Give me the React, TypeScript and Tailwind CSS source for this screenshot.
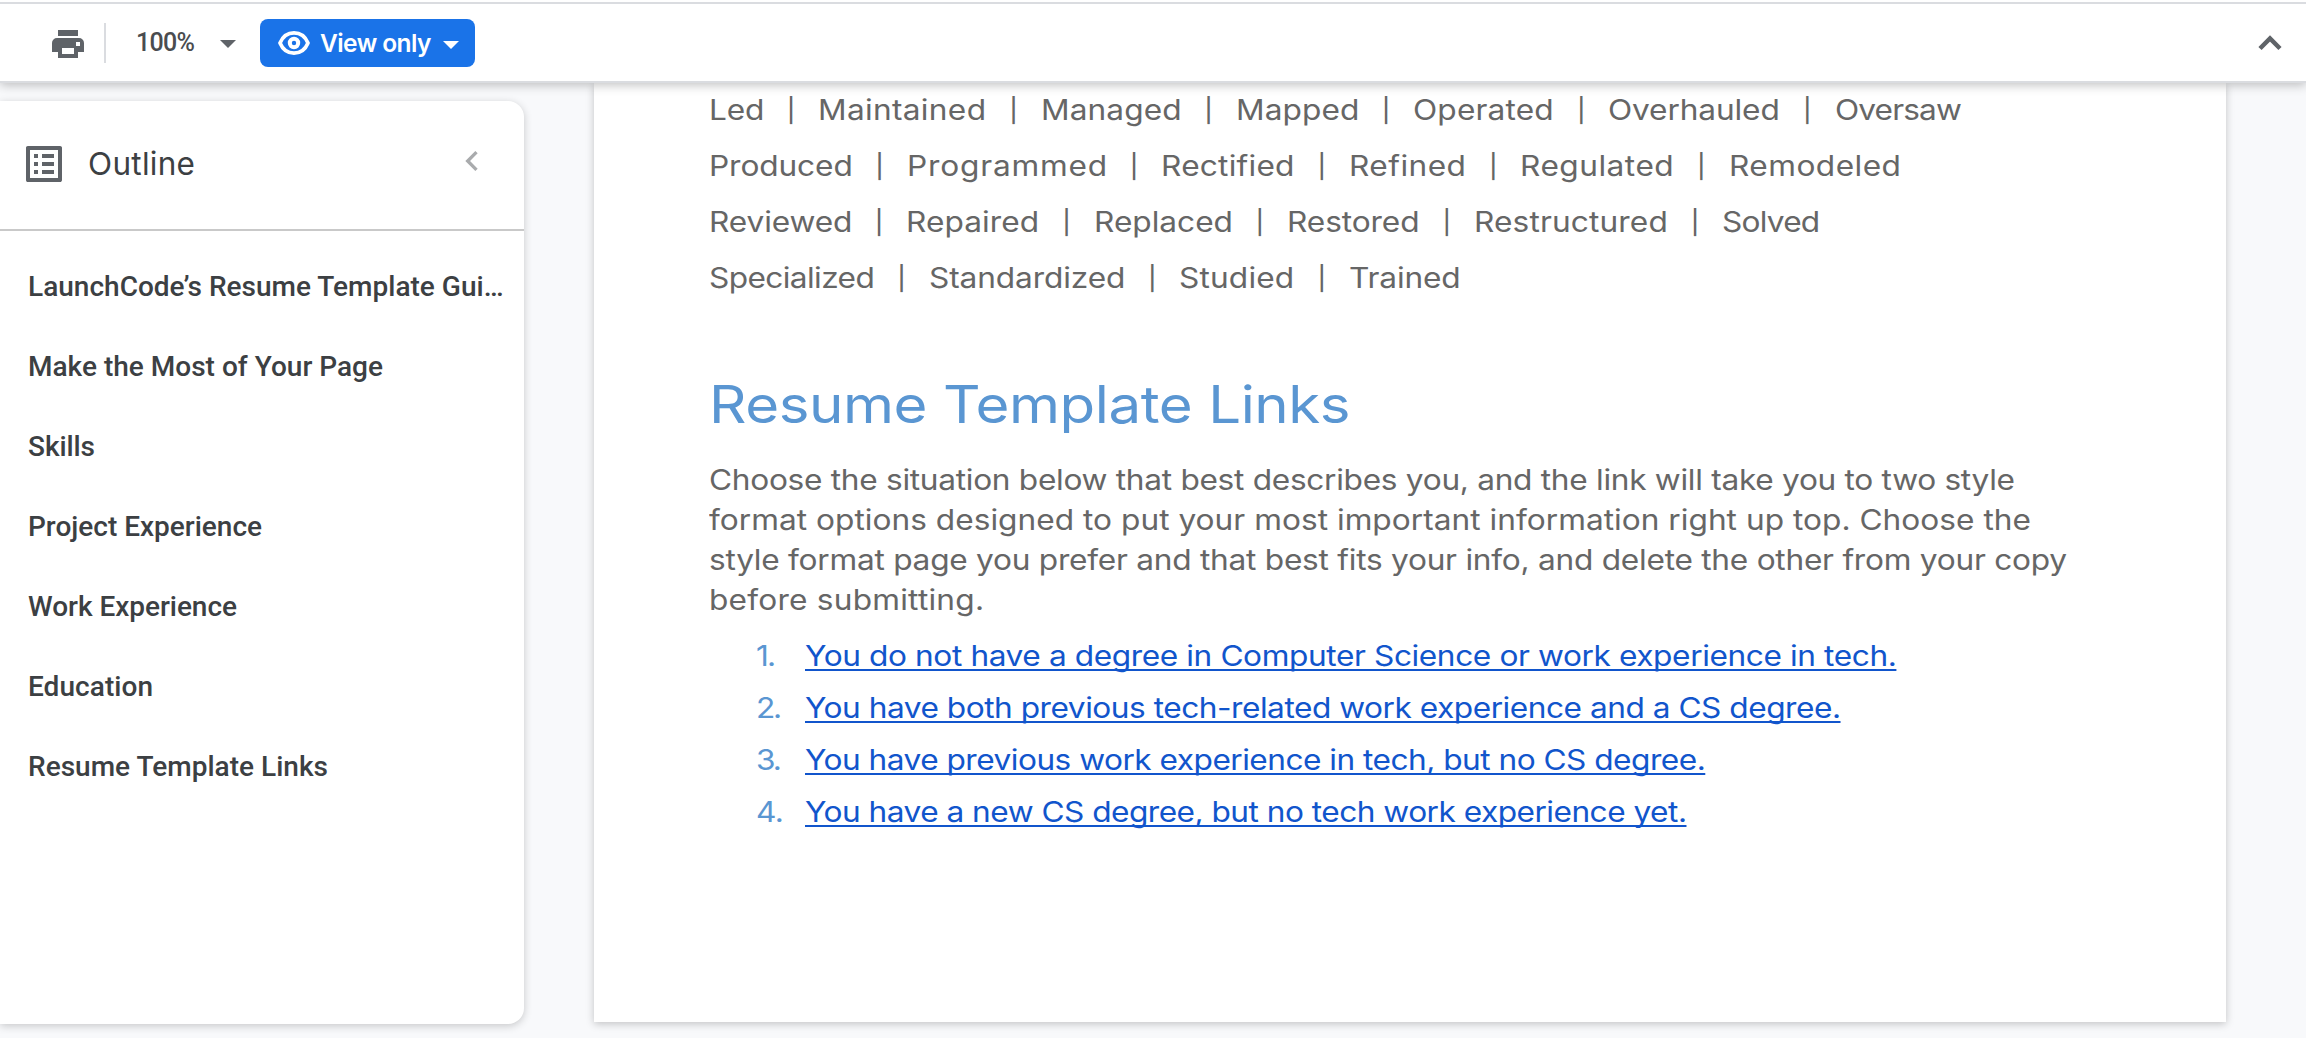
import { useLayoutEffect, useRef, useState } from "react";
import { MdChevronLeft, MdListAlt } from "react-icons/md";

type FitProps = { text: string; width: number; stretch?: number; className?: string };

/** Text that fills exactly `width` pixels: widened by `stretch`, the rest by tracking. */
function Fit({ text, width, stretch = 1, className = "" }: FitProps) {
  const ref = useRef<HTMLSpanElement>(null);
  const [tracking, setTracking] = useState(0);
  useLayoutEffect(() => {
    if (!ref.current) return;
    const natural = ref.current.getBoundingClientRect().width / stretch;
    setTracking((width / stretch - natural) / (text.length - 1));
  }, [text, width, stretch]);
  return (
    <span className="block shrink-0 whitespace-pre" style={{ width }}>
      <span
        ref={ref}
        className={`inline-block origin-left align-top ${className}`}
        style={{ letterSpacing: tracking, transform: stretch === 1 ? undefined : `scaleX(${stretch})` }}
      >
        {text}
      </span>
    </span>
  );
}

type Word = [string, number];

const DOC_STRETCH = 1.11;

const verbRows: Word[][] = [
  [["Led", 55.4], ["Maintained", 168], ["Managed", 140.6], ["Mapped", 123.3], ["Operated", 140.7], ["Overhauled", 171.8], ["Oversaw", 126.8]],
  [["Produced", 143.8], ["Programmed", 200.1], ["Rectified", 133.5], ["Refined", 117], ["Regulated", 153.7], ["Remodeled", 172]],
  [["Reviewed", 143.4], ["Repaired", 133], ["Replaced", 139], ["Restored", 132.6], ["Restructured", 193.8], ["Solved", 98.2]],
  [["Specialized", 165.8], ["Standardized", 196.4], ["Studied", 115.2], ["Trained", 111.7]],
];

const paragraph: Word[] = [
  ["Choose the situation below that best describes you, and the link will take you to two style", 1306],
  ["format options designed to put your most important information right up top. Choose the", 1322],
  ["style format page you prefer and that best fits your info, and delete the other from your copy", 1358],
  ["before submitting.", 275],
];

const links: Word[] = [
  ["You do not have a degree in Computer Science or work experience in tech.", 1091.8],
  ["You have both previous tech-related work experience and a CS degree.", 1036],
  ["You have previous work experience in tech, but no CS degree.", 900.8],
  ["You have a new CS degree, but no tech work experience yet.", 882],
];

const numberWidths = [20, 26, 26, 28];

const outline: Word[] = [
  ["LaunchCode’s Resume Template Gui…", 475.5],
  ["Make the Most of Your Page", 355],
  ["Skills", 67],
  ["Project Experience", 234],
  ["Work Experience", 209],
  ["Education", 125],
  ["Resume Template Links", 300],
];

function PrintIcon() {
  return (
    <svg width="32" height="28" viewBox="0 0 32 28" className="shrink-0 fill-[#5f6368]">
      <path d="M6 0h20v6H6z" />
      <path
        fillRule="evenodd"
        d="M5 8h22a5 5 0 0 1 5 5v9h-6v6H6v-6H0v-9a5 5 0 0 1 5-5zm5 10v6h12v-6zm14-6v4h4v-4z"
      />
    </svg>
  );
}

function EyeIcon() {
  return (
    <svg width="32" height="24" viewBox="0 0 32 24" fill="none" stroke="white" className="shrink-0">
      <path
        d="M2 12C4.600 5.800 9.800 1.900 16 1.900S27.400 5.800 30 12c-2.600 6.200-7.800 10.100-14 10.100S4.600 18.200 2 12z"
        strokeWidth="3.700"
        strokeLinejoin="round"
      />
      <circle cx="16" cy="12" r="4.200" strokeWidth="4" />
    </svg>
  );
}

function Toolbar() {
  return (
    <header className="relative z-10 h-[83px] shrink-0 bg-white pt-[2px] shadow-[0_2px_10px_rgba(0,0,0,0.25)]">
      <div className="flex h-[81px] items-center border-y-2 border-[#dadce0] pr-[24px] pl-[52px]">
        <div className="mt-[2px]">
          <PrintIcon />
        </div>
        <div className="ml-5 h-10 w-[2px] bg-[#dadce0]" />
        <div className="ml-[30px] text-[25px] leading-8 font-medium text-[#4a4c4f]">
          <Fit text="100%" width={59} />
        </div>
        <svg width="16" height="8" viewBox="0 0 16 8" className="mt-[3px] ml-[25px] fill-[#5f6368]">
          <path d="M0 0h16L8 8z" />
        </svg>
        <div className="mt-[1px] ml-[24px] flex h-12 w-[215px] items-center rounded-lg bg-[#1a73e8] pl-[18px] font-[Inter] text-[24.500px] leading-8 font-semibold text-white">
          <EyeIcon />
          <div className="mt-[-1px] ml-[10px]">
            <Fit text="View only" width={111.500} />
          </div>
          <svg width="16" height="8" viewBox="0 0 16 8" className="mt-[4px] ml-[11.500px] fill-white">
            <path d="M0 0h16L8 8z" />
          </svg>
        </div>
        <svg width="24" height="16" viewBox="0 0 24 16" className="ml-auto fill-none stroke-[#5f6368]">
          <path d="M2 13.500 12 3.500l10 10" strokeWidth="4.500" />
        </svg>
      </div>
    </header>
  );
}

function Sidebar() {
  return (
    <aside className="mt-[18px] h-[923px] w-[524px] shrink-0 rounded-r-[16px] bg-white shadow-[0_2px_8px_rgba(0,0,0,0.2)]">
      <div className="flex h-[130px] items-center border-b-2 border-[#c9c9c9] pb-[2px] pl-5">
        <MdListAlt className="size-12 text-[#5f6368]" />
        <div className="ml-[20px] font-[Inter] text-[31.500px] leading-10 text-[#3c4043]">
          <Fit text="Outline" width={107} />
        </div>
        <MdChevronLeft className="mt-[-6px] mr-[32px] ml-auto size-10 text-[#a9abad]" />
      </div>
      <nav className="flex flex-col pt-[16px] pl-[28px] text-[28px] leading-[80px] font-medium text-[#3c4043]">
        {outline.map(([text, width]) => (
          <Fit key={text} text={text} width={width} />
        ))}
      </nav>
    </aside>
  );
}

function Page() {
  return (
    <main className="ml-[70px] h-[939px] w-[1632px] shrink-0 bg-white pl-[114.500px] font-[Inter] text-[28.500px] text-[#666666] shadow-[0_2px_8px_rgba(0,0,0,0.22)]">
      <div className="mt-[-1px] leading-[56px]">
        {verbRows.map((row, i) => (
          <div key={i} className="flex h-14">
            {row.map(([text, width], j) => (
              <div key={text} className="flex">
                {j > 0 && <span className="w-[54.400px] pt-px text-center text-[23.500px] font-medium">|</span>}
                <Fit text={text} width={width} stretch={DOC_STRETCH} />
              </div>
            ))}
          </div>
        ))}
      </div>
      <h1 className="mt-[59px] flex text-[52px] leading-[80px] text-[#5a96d2]">
        <Fit text="Resume Template Links" width={641.500} stretch={1.12} />
      </h1>
      <div className="mt-[15px] leading-10">
        {paragraph.map(([text, width]) => (
          <Fit key={text} text={text} width={width} stretch={DOC_STRETCH} />
        ))}
      </div>
      <ol className="mt-[10px] leading-[52px]">
        {links.map(([text, width], i) => (
          <li key={text} className="flex pl-[47px]">
            <div className="w-[49.500px] text-[#5a96d2]">
              <Fit text={`${i + 1}.`} width={numberWidths[i]} stretch={DOC_STRETCH} />
            </div>
            <Fit
              text={text}
              width={width}
              stretch={DOC_STRETCH}
              className="text-[#1155cc] underline decoration-2 underline-offset-[3px] [text-decoration-skip-ink:none]"
            />
          </li>
        ))}
      </ol>
    </main>
  );
}

export default function App() {
  return (
    <div className="flex h-[1038px] w-[2306px] flex-col overflow-hidden bg-white font-[Roboto,sans-serif]">
      <Toolbar />
      <div className="flex min-h-0 flex-1 bg-[#f8f9fb]">
        <Sidebar />
        <Page />
      </div>
    </div>
  );
}
